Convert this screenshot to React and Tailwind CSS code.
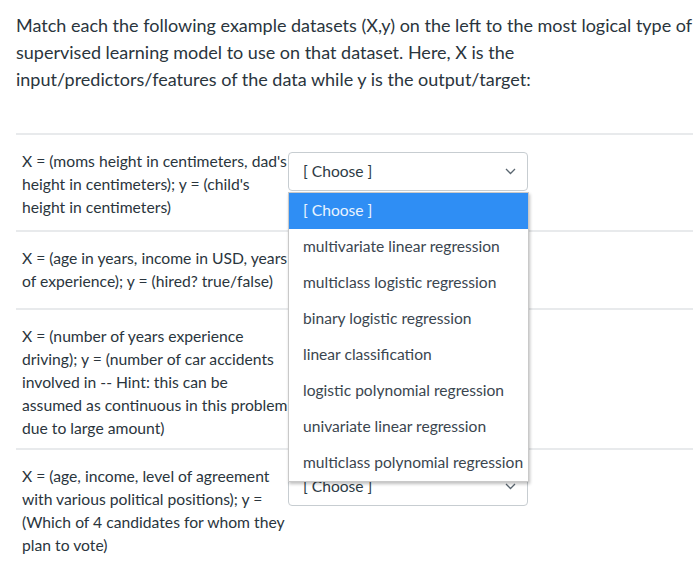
import React from "react";

const Chevron = () => (
  <svg width="11" height="7" viewBox="0 0 11 7" className="shrink-0">
    <path d="M1 1 L5.5 5.5 L10 1" fill="none" stroke="#5a6670" strokeWidth="1.3" />
  </svg>
);

const Select = ({ className = "" }) => (
  <div
    className={
      "w-[240px] h-[39px] border border-[#c7cdd1] rounded-[4px] bg-white flex items-center justify-between pl-[14px] pr-[11px] text-[15.6px] text-[#2d3b45] " +
      className
    }
  >
    <span>[ Choose ]</span>
    <Chevron />
  </div>
);

const options = [
  "[ Choose ]",
  "multivariate linear regression",
  "multiclass logistic regression",
  "binary logistic regression",
  "linear classification",
  "logistic polynomial regression",
  "univariate linear regression",
  "multiclass polynomial regression",
];

const Row = ({ lines, h, hidden }) => (
  <div className={"flex items-start border-t-2 border-[#e8eaec] " + h}>
    <div className="w-[272px] pl-[6px] pt-[15px] leading-[23px] text-[15.7px] text-[#2a353d] whitespace-nowrap">
      {lines.map((l, i) => (
        <div key={i}>{l}</div>
      ))}
    </div>
    <Select className={"mt-[17px]" + (hidden ? " invisible" : "")} />
  </div>
);

export default function App() {
  return (
    <div
      className="relative w-[700px] h-[575px] overflow-hidden bg-white pl-[16px] pr-[7px]"
      style={{ fontFamily: "Lato, 'Noto Sans', sans-serif" }}
    >
      <div className="pt-[12px] text-[18px] leading-[27px] text-[#2a353d] whitespace-nowrap h-[133px]">
        <div>Match each the following example datasets (X,y) on the left to the most logical type of</div>
        <div>supervised learning model to use on that dataset. Here, X is the</div>
        <div>input/predictors/features of the data while y is the output/target:</div>
      </div>
      <Row
        h="h-[97px]"
        lines={[
          "X = (moms height in centimeters, dad's",
          "height in centimeters); y = (child's",
          "height in centimeters)",
        ]}
      />
      <Row
        h="h-[78px]"
        hidden
        lines={[
          "X = (age in years, income in USD, years",
          "of experience); y = (hired? true/false)",
        ]}
      />
      <Row
        h="h-[140px]"
        hidden
        lines={[
          "X = (number of years experience",
          "driving); y = (number of car accidents",
          "involved in -- Hint: this can be",
          "assumed as continuous in this problem",
          "due to large amount)",
        ]}
      />
      <Row
        h="h-[127px]"
        lines={[
          "X = (age, income, level of agreement",
          "with various political positions); y =",
          "(Which of 4 candidates for whom they",
          "plan to vote)",
        ]}
      />

      <div className="absolute left-[288px] top-[192px] w-[241px] bg-white border border-[#c9c9c9] shadow-[1px_2px_3px_rgba(0,0,0,0.25)]">
        {options.map((o, i) => (
          <div
            key={i}
            className={
              "h-[36px] flex items-center pl-[14px] text-[15.6px] whitespace-nowrap " +
              (i === 0 ? "bg-[#2f8ef4] text-[#eaf4ff]" : "text-[#3b4650]")
            }
          >
            {o}
          </div>
        ))}
      </div>
    </div>
  );
}
